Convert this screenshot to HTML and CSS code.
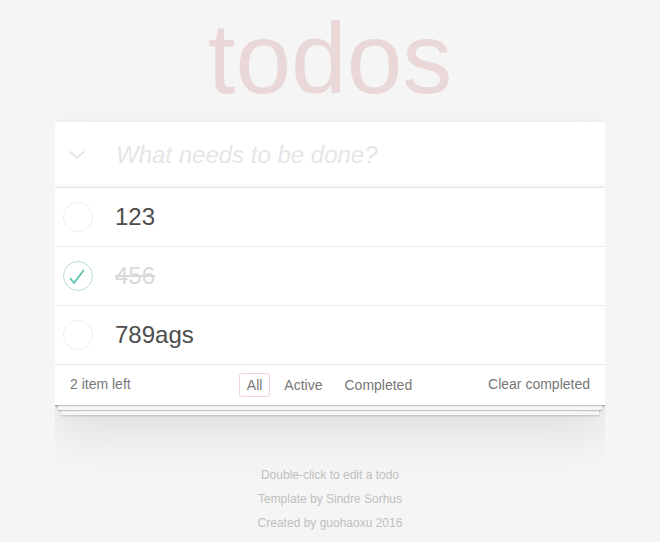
FILE: index.html
```html
<!DOCTYPE html>
<html lang="en">
<head>
<meta charset="utf-8">
<title>todos</title>
<link rel="stylesheet" href="styles.css">
</head>
<body>
<section class="todoapp-wrap">
  <h1 class="title">todos</h1>
  <div class="todoapp">
    <header class="header">
      <span class="toggle-all">
        <svg width="18" height="10" viewBox="0 0 18 10"><polyline points="1.5,1.5 9,7.5 16.5,1.5" fill="none" stroke="#e6e6e6" stroke-width="2.2"/></svg>
      </span>
      <input class="new-todo" placeholder="What needs to be done?">
    </header>
    <ul class="todo-list">
      <li class="todo">
        <span class="toggle"><svg width="30" height="30" viewBox="0 0 30 30"><circle cx="15" cy="15" r="14.5" fill="none" stroke="#ededed" stroke-width="1"/></svg></span>
        <label class="label">123</label>
      </li>
      <li class="todo done">
        <span class="toggle"><svg width="30" height="30" viewBox="0 0 30 30"><circle cx="15" cy="15" r="14.5" fill="none" stroke="#bddad5" stroke-width="1"/><polyline points="7.5,17.5 11,22 20.5,9.5" fill="none" stroke="#5dc2af" stroke-width="1.8" stroke-linecap="round" stroke-linejoin="round"/></svg></span>
        <label class="label">456</label>
      </li>
      <li class="todo">
        <span class="toggle"><svg width="30" height="30" viewBox="0 0 30 30"><circle cx="15" cy="15" r="14.5" fill="none" stroke="#ededed" stroke-width="1"/></svg></span>
        <label class="label">789ags</label>
      </li>
    </ul>
    <footer class="footer">
      <span class="count">2 item left</span>
      <ul class="filters">
        <li><a class="filter selected">All</a></li>
        <li><a class="filter">Active</a></li>
        <li><a class="filter">Completed</a></li>
      </ul>
      <span class="clear">Clear completed</span>
    </footer>
  </div>
</section>
<footer class="info">
  <p>Double-click to edit a todo</p>
  <p>Template by Sindre Sorhus</p>
  <p>Created by guohaoxu 2016</p>
</footer>
</body>
</html>
```
FILE: styles.css
```css
html, body {
  margin: 0;
  padding: 0;
}
body {
  font: 14px "Liberation Sans", Arial, Helvetica, sans-serif;
  line-height: 1.4em;
  background: #f5f5f5;
  color: #4d4d4d;
  width: 550px;
  margin: 0 auto;
}
.title {
  margin: 8px 0 14px;
  font-size: 100px;
  line-height: 100px;
  font-weight: normal;
  text-align: center;
  color: rgba(175, 47, 47, 0.15);
}
.todoapp {
  background: #fff;
  position: relative;
  box-shadow: 0 2px 4px 0 rgba(0, 0, 0, 0.2), 0 25px 50px 0 rgba(0, 0, 0, 0.1);
}
.header {
  display: flex;
  align-items: center;
  height: 65px;
  box-shadow: inset 0 -2px 1px rgba(0, 0, 0, 0.03);
}
.toggle-all {
  width: 60px;
  display: flex;
  padding-left: 13px;
  box-sizing: border-box;
}
.toggle-all svg { display: block; }
.new-todo {
  flex: 1;
  border: none;
  outline: none;
  background: transparent;
  padding: 16px 16px 16px 1px;
  font: 24px "Liberation Sans", Arial, sans-serif;
  line-height: 33px;
  color: #4d4d4d;
}
.new-todo::placeholder {
  font-style: italic;
  color: #e6e6e6;
}
.todo-list {
  list-style: none;
  margin: 0;
  padding: 0;
  border-top: 1px solid #e6e6e6;
}
.todo {
  display: flex;
  align-items: center;
  height: 58px;
  border-bottom: 1px solid #ededed;
  font-size: 24px;
}
.todo:last-child { border-bottom: none; }
.toggle {
  width: 60px;
  padding-left: 8px;
  box-sizing: border-box;
  display: flex;
}
.toggle svg { display: block; }
.label {
  line-height: 28px;
  color: #4d4d4d;
}
.done .label {
  color: #d9d9d9;
  text-decoration: line-through;
}
.footer {
  position: relative;
  display: grid;
  grid-template-columns: 1fr auto 1fr;
  align-items: center;
  height: 40px;
  padding: 0 15px;
  border-top: 1px solid #e6e6e6;
  color: #777;
  line-height: 20px;
}
.footer::before {
  content: '';
  position: absolute;
  right: 0;
  bottom: 0;
  left: 0;
  height: 50px;
  overflow: hidden;
  pointer-events: none;
  box-shadow: 0 1px 1px rgba(0, 0, 0, 0.2),
              0 8px 0 -3px #f6f6f6,
              0 9px 1px -3px rgba(0, 0, 0, 0.2),
              0 16px 0 -6px #f6f6f6,
              0 17px 2px -6px rgba(0, 0, 0, 0.2);
}
.count { justify-self: start; padding-bottom: 2px; }
.clear { justify-self: end; padding-bottom: 2px; }
.filters {
  list-style: none;
  margin: 0 0 0 -1px;
  padding: 0;
  display: flex;
}
.filter {
  display: block;
  margin: 3px;
  padding: 3px 7px;
  line-height: 16px;
  border: 1px solid transparent;
  border-radius: 3px;
  color: inherit;
}
.filter.selected {
  border-color: rgba(175, 47, 47, 0.2);
}
.info {
  margin-top: 58px;
  text-align: center;
  color: #bfbfbf;
  font-size: 12px;
  line-height: 24px;
}
.info p { margin: 0; }
```
